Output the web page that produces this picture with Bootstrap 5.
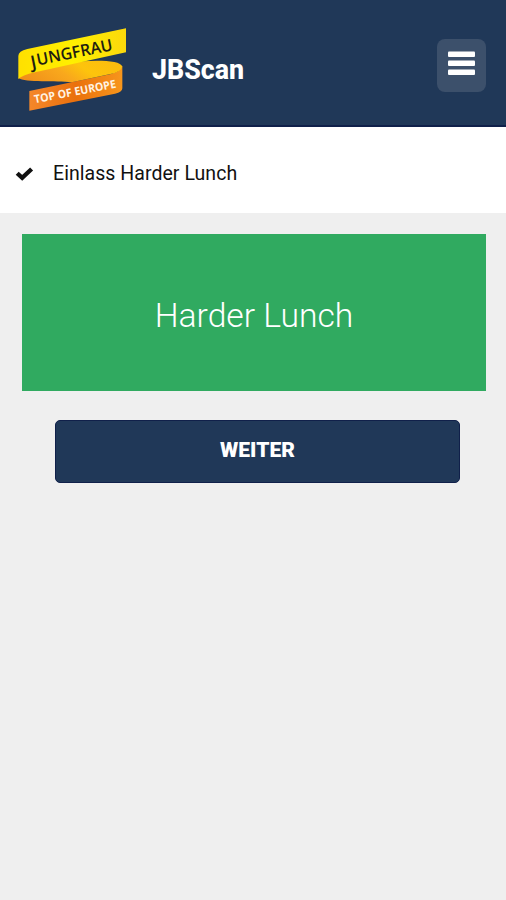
<!DOCTYPE html>
<html lang="de">
<head>
<meta charset="utf-8">
<meta name="viewport" content="width=device-width, initial-scale=1">
<title>JBScan</title>
<link href="https://cdn.jsdelivr.net/npm/bootstrap@5.3.0/dist/css/bootstrap.min.css" rel="stylesheet">
<style>
body { font-family: Roboto, "Liberation Sans", sans-serif; background: #efefef; color: #111; }
.app-bar { height: 127px; background: #203858; border-bottom: 2px solid #10204a; padding: 20px 20px 0 10px; }
.brand-name { font-size: 26.8px; line-height: 32px; margin: 34px 0 0 17px; font-weight: 800; }
.menu-btn { width: 49px; height: 53px; margin-top: 19px; padding: 12px 11px; background: #3c506b; border: 0; border-radius: 8px; }
.event-row { height: 86px; padding: 8px 15px 0; font-size: 19.5px; gap: 19px; }
.event-name { letter-spacing: .05px; }
.status-panel { height: 157px; margin: 21px 20px 0 22px; padding-top: 8px; background: #30aa60; font-size: 33.7px; font-weight: 300; }
.next-btn, .next-btn:hover { height: 63px; margin: 29px 46px 0 55px; padding-bottom: 8px; background: #203858; border: 1px solid #10204a; border-radius: 5px; font-size: 21px; font-weight: 900; color: #fff; }
</style>
</head>
<body>
<header class="app-bar d-flex align-items-start">
  <svg width="125" height="100" viewBox="0 0 375 300" role="img" aria-label="Jungfrau Top of Europe">
    <defs>
      <linearGradient id="fold" x1="0" x2="1" y1=".6" y2=".3"><stop offset="0" stop-color="#f0901a"/><stop offset=".4" stop-color="#f9a81c"/><stop offset=".65" stop-color="#fdc40c"/><stop offset="1" stop-color="#fcbc0e"/></linearGradient>
      <linearGradient id="top" x1="0" x2="1"><stop offset="0" stop-color="#ffe000"/><stop offset=".5" stop-color="#fff000"/><stop offset="1" stop-color="#fbd80c"/></linearGradient>
      <linearGradient id="low" x1="0" x2="1"><stop offset="0" stop-color="#f4872a"/><stop offset=".5" stop-color="#ea700c"/><stop offset="1" stop-color="#f7961c"/></linearGradient>
    </defs>
    <path d="M58 213L300 163Q334 153 337 138V205Q337 217 315 221L58 272Z" fill="url(#low)"/>
    <path d="M25 174Q30 158 75 150L215 124C270 120 334 122 337 140Q335 155 298 163L185 187C140 182 45 188 25 174Z" fill="url(#fold)"/>
    <path d="M348 25V97L75 157Q35 166 25 177V108Q25 93 52 87Z" fill="url(#top)"/>
    <g font-family="Open Sans, sans-serif">
      <g transform="translate(65 140) rotate(-11.5)" font-weight="600" fill="#211d10"><text font-size="54" y="6">J</text><text x="19" y="0" font-size="49" textLength="231" lengthAdjust="spacingAndGlyphs">UNGFRAU</text></g>
      <text transform="translate(75 250) rotate(-11)" font-size="34" font-weight="700" fill="#fff3e2" textLength="249" lengthAdjust="spacingAndGlyphs">TOP OF EUROPE</text>
    </g>
  </svg>
  <h1 class="brand-name text-white">JBScan</h1>
  <button class="menu-btn ms-auto d-flex" type="button" aria-label="Menü">
    <svg width="27" height="25" viewBox="0 0 27 25" fill="#fff"><rect y="0.5" width="27" height="5.5" rx="1"/><rect y="9.5" width="27" height="5.5" rx="1"/><rect y="18.5" width="27" height="5.5" rx="1"/></svg>
  </button>
</header>
<main>
  <div class="event-row d-flex align-items-center bg-white">
    <svg width="19" height="14" viewBox="0 0 19 14"><path d="M2.2 6.2L7.2 10.9L16.6 2" fill="none" stroke="#111" stroke-width="4.3"/></svg>
    <span class="event-name">Einlass Harder Lunch</span>
  </div>
  <div class="status-panel d-flex align-items-center justify-content-center text-white">Harder Lunch</div>
  <div class="d-grid"><button class="btn next-btn" type="button">WEITER</button></div>
</main>
<script src="https://cdn.jsdelivr.net/npm/bootstrap@5.3.0/dist/js/bootstrap.bundle.min.js"></script>
</body>
</html>
